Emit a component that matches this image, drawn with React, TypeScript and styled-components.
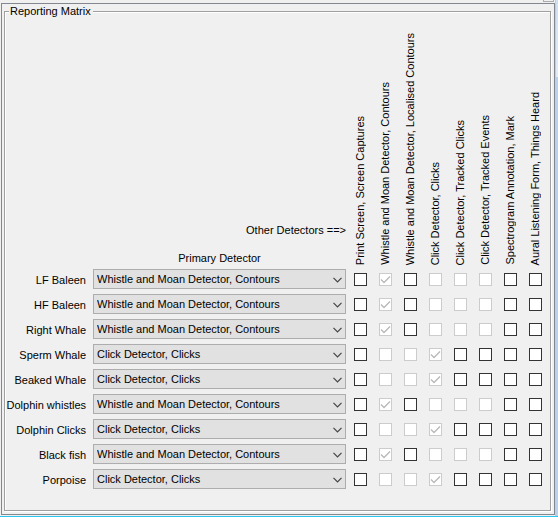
import React, { useState } from 'react';
import styled, { createGlobalStyle } from 'styled-components';

const GlobalStyle = createGlobalStyle`
  * { box-sizing: border-box; }
  body {
    margin: 0;
    background: #f0f0f0;
    color: #000;
    font-family: "Liberation Sans", Arial, sans-serif;
    font-size: 11px;
    line-height: 14px;
  }
`;

const Desktop = styled.div`
  display: flex;
  flex-direction: column;
  min-height: 100vh;
  padding: 3px 3px 0 1px;
  background:
    linear-gradient(#cfe0f3, #e2ecf8) right top / 2px 77px no-repeat,
    linear-gradient(to left, #b9d1ea 3px, #f0f0f0 3px);
  border-bottom: 1px solid #29c5ee;
  position: relative;
`;

const ScrollCorner = styled.span`
  position: absolute;
  top: 0;
  right: 4px;
  width: 11px;
  height: 2px;
  border: solid #acacac;
  border-width: 0 1px 1px;
`;

const Pane = styled.main`
  flex: 1;
  display: flex;
  padding: 0 3px 3px 2px;
  margin-bottom: 1px;
  border: 1px solid #828790;
`;

const Group = styled.fieldset`
  flex: 1;
  min-width: 0;
  margin: 0;
  padding: 0 2px 16px 0;
  border: 1px solid #a0a0a0;
  box-shadow: inset 1px 1px #fff, 1px 1px #fff;
`;

const Legend = styled.legend`
  margin-left: 4px;
  padding: 0 2px 0 1px;
  height: 14px;
  background: #f0f0f0;
`;

const Matrix = styled.table`
  width: 100%;
  border-collapse: collapse;
  table-layout: fixed;

  th, td { padding: 0; font-weight: normal; }
`;

const NameCol = styled.col` width: 86px; `;
const MarkCol = styled.col` width: 25px; `;

const CornerHead = styled.th`
  height: 249px;
`;

const DetectorHead = styled.th`
  vertical-align: bottom;
`;

const HeadLines = styled.div`
  display: flex;
  flex-direction: column;
  gap: 14px;
  padding: 0 2px;
  margin-bottom: 2px;
`;

const OtherCaption = styled.span` text-align: right; `;
const PrimaryCaption = styled.span` text-align: center; `;

const MarkHead = styled.th`
  vertical-align: bottom;
`;

const Sideways = styled.span`
  display: block;
  margin: 0 auto 2px 5px;
  writing-mode: vertical-rl;
  transform: rotate(180deg);
  white-space: nowrap;
  line-height: 14px;
`;

const RowName = styled.th`
  height: 25px;
  text-align: right;
  white-space: nowrap;

  label { padding-right: 5px; }
`;

const PickerBox = styled.div`
  position: relative;
  margin: 0 2px 1px;
`;

const Picker = styled.select`
  display: block;
  appearance: none;
  width: 100%;
  height: 20px;
  padding: 0 18px 0 3px;
  border: 1px solid #adadad;
  border-radius: 0;
  background: #e1e1e1;
  color: #000;
  font: inherit;
`;

const Chevron = styled.svg`
  position: absolute;
  right: 4px;
  top: 8px;
  pointer-events: none;
`;

const MarkCell = styled.td`
  text-align: center;
`;

const Tick = styled.input`
  display: block;
  appearance: none;
  width: 13px;
  height: 13px;
  margin: 0 auto;
  border: 1px solid #333;
  background: #fff;

  &:disabled { border-color: #ccc; }
  &:checked {
    background: #fff url("data:image/svg+xml,%3Csvg xmlns='http://www.w3.org/2000/svg' viewBox='0 0 11 11'%3E%3Cpath d='M1 5.5 4 8.5 10 2.5' fill='none' stroke='%23b8b8b8' stroke-width='1.3'/%3E%3C/svg%3E") center / 11px no-repeat;
  }
`;

const WHISTLE = 'Whistle and Moan Detector, Contours';
const CLICK = 'Click Detector, Clicks';

const detectors = [
  'Print Screen, Screen Captures',
  WHISTLE,
  'Whistle and Moan Detector, Localised Contours',
  CLICK,
  'Click Detector, Tracked Clicks',
  'Click Detector, Tracked Events',
  'Spectrogram Annotation, Mark',
  'Aural Listening Form, Things Heard',
];

const species: [string, string][] = [
  ['LF Baleen', WHISTLE],
  ['HF Baleen', WHISTLE],
  ['Right Whale', WHISTLE],
  ['Sperm Whale', CLICK],
  ['Beaked Whale', CLICK],
  ['Dolphin whistles', WHISTLE],
  ['Dolphin Clicks', CLICK],
  ['Black fish', WHISTLE],
  ['Porpoise', CLICK],
];

const locked: Record<string, number[]> = {
  [WHISTLE]: [1, 3, 4, 5],
  [CLICK]: [1, 2, 3],
};

function SpeciesRow({ name, initial }: { name: string; initial: string }) {
  const [primary, setPrimary] = useState(initial);
  const [marks, setMarks] = useState<Record<number, boolean>>({});
  const id = name.toLowerCase().replace(/ /g, '-');
  return (
    <tr>
      <RowName scope="row"><label htmlFor={id}>{name}</label></RowName>
      <td>
        <PickerBox>
          <Picker id={id} value={primary} onChange={e => setPrimary(e.target.value)}>
            <option>{WHISTLE}</option>
            <option>{CLICK}</option>
          </Picker>
          <Chevron width="9" height="6" viewBox="0 0 9 6" aria-hidden="true">
            <path d="M0.5 0.8 4.5 4.8 8.5 0.8" fill="none" stroke="#444" strokeWidth="1.2" />
          </Chevron>
        </PickerBox>
      </td>
      {detectors.map((detector, i) => (
        <MarkCell key={detector}>
          <Tick
            type="checkbox"
            aria-label={`${name}: ${detector}`}
            disabled={locked[primary].includes(i)}
            checked={detector === primary || !!marks[i]}
            onChange={e => setMarks({ ...marks, [i]: e.target.checked })}
          />
        </MarkCell>
      ))}
    </tr>
  );
}

export default function App() {
  return (
    <Desktop>
      <GlobalStyle />
      <ScrollCorner />
      <Pane>
        <Group>
          <Legend>Reporting Matrix</Legend>
          <Matrix>
            <colgroup>
              <NameCol />
              <col />
              {detectors.map(d => <MarkCol key={d} />)}
            </colgroup>
            <thead>
              <tr>
                <CornerHead />
                <DetectorHead scope="col">
                  <HeadLines>
                    <OtherCaption>Other Detectors ==&gt;</OtherCaption>
                    <PrimaryCaption>Primary Detector</PrimaryCaption>
                  </HeadLines>
                </DetectorHead>
                {detectors.map(d => (
                  <MarkHead key={d} scope="col"><Sideways>{d}</Sideways></MarkHead>
                ))}
              </tr>
            </thead>
            <tbody>
              {species.map(([name, initial]) => (
                <SpeciesRow key={name} name={name} initial={initial} />
              ))}
            </tbody>
          </Matrix>
        </Group>
      </Pane>
    </Desktop>
  );
}
